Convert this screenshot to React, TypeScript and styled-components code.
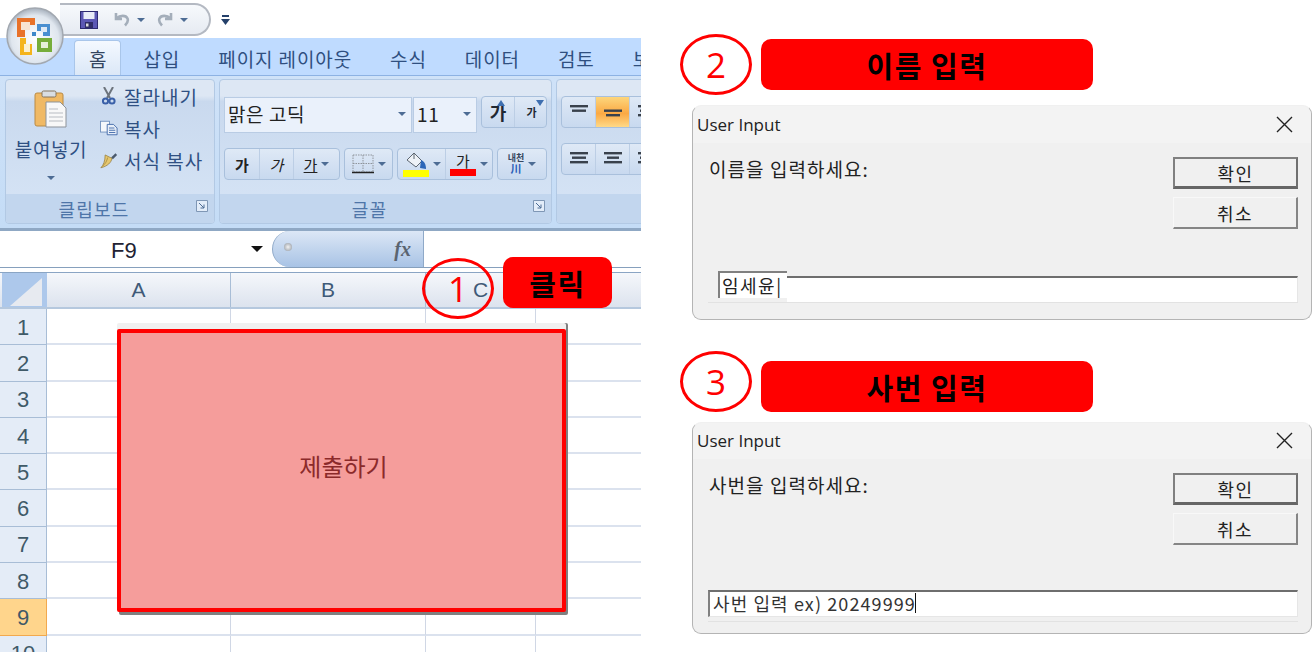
import React from 'react'
import styled, { createGlobalStyle } from 'styled-components'

const KR = `"Noto Sans CJK KR", "Noto Sans", sans-serif`

const Global = createGlobalStyle`
  html, body { margin: 0; padding: 0; background: #fff; overflow: hidden; }
  * { box-sizing: border-box; }
`

const Page = styled.div`
  width: 1316px;
  height: 652px;
  display: flex;
  overflow: hidden;
  font-family: ${KR};
`

/* excel side */
const Excel = styled.div`
  position: relative;
  width: 641px;
  height: 652px;
  flex: none;
  display: flex;
  flex-direction: column;
  overflow: hidden;
`
const TitleRow = styled.div`
  height: 38px;
  flex: none;
  display: flex;
  align-items: flex-start;
  padding: 3px 0 0 60px;
  background: #fff;
`
const QuickBar = styled.div`
  width: 151px;
  height: 33px;
  display: flex;
  align-items: center;
  gap: 11px;
  padding-left: 20px;
  background: linear-gradient(#f7f9fc, #e6ebf2);
  border: 2px solid #b4b9c2;
  border-left: none;
  border-radius: 0 17px 17px 0;
`
const QuickTail = styled.div`
  display: flex;
  margin: 12px 0 0 10px;
`
const OfficeOrb = styled.div`
  position: absolute;
  left: 6px;
  top: 7px;
  width: 58px;
  height: 58px;
`
const TabRow = styled.div`
  height: 38px;
  flex: none;
  display: flex;
  align-items: flex-end;
  padding-left: 74px;
  background: #bfdbff;
  border-bottom: 1px solid #8db2e3;
  white-space: nowrap;
`
const Tab = styled.div<{ $active?: boolean }>`
  height: ${p => (p.$active ? 35 : 34)}px;
  padding: 0 ${p => (p.$active ? 14 : 19)}px;
  margin-right: ${p => (p.$active ? 3 : 0)}px;
  display: flex;
  align-items: center;
  font-size: 19px;
  letter-spacing: ${p => (p.$active ? 0 : 0.9)}px;
  color: ${p => (p.$active ? '#33455f' : '#2f4f80')};
  border-radius: 4px 4px 0 0;
  ${p => p.$active && `
    background: linear-gradient(#f4f9ff, #dbe8f7);
    border: 1px solid #a9c6ea;
    border-bottom: none;
  `}
`
const Ribbon = styled.div`
  height: 155px;
  flex: none;
  display: flex;
  gap: 4px;
  padding: 3px 0 4px 5px;
  background: linear-gradient(#cfe2f8, #c4dcf6);
  border-bottom: 3px solid #8fa8c4;
`
const Group = styled.div<{ $w: number }>`
  width: ${p => p.$w}px;
  flex: none;
  display: flex;
  flex-direction: column;
  overflow: hidden;
  border: 1px solid #b2c9e4;
  border-radius: 4px;
  background: linear-gradient(#dde7f4 0, #dde7f4 11%, #c9d9ee 15%, #d7e5f6 100%);
`
const GroupBody = styled.div`
  flex: 1;
  min-height: 0;
`
const GroupFoot = styled.div`
  position: relative;
  height: 29px;
  flex: none;
  display: flex;
  align-items: center;
  justify-content: center;
  padding-right: 32px;
  font-size: 18px;
  letter-spacing: 1.2px;
  color: #4e75a8;
  background: #c2d6ee;
`
const Launcher = styled.svg`
  position: absolute;
  right: 6px;
  top: 6px;
`
const ClipBody = styled(GroupBody)`
  display: flex;
  padding-left: 7px;
`
const PasteCol = styled.div`
  width: 76px;
  flex: none;
  padding-top: 10px;
  display: flex;
  flex-direction: column;
  align-items: center;
  font-size: 19px;
  letter-spacing: 0.6px;
  color: #2f5083;
`
const PasteLabel = styled.div`
  margin: 8px 0 14px;
  line-height: 26px;
  white-space: nowrap;
`
const ClipList = styled.div`
  margin-left: 11px;
  display: flex;
  flex-direction: column;
`
const ClipItem = styled.div`
  height: 32px;
  display: flex;
  align-items: center;
  gap: 6px;
  font-size: 19px;
  letter-spacing: 1px;
  color: #2f5083;
  white-space: nowrap;
`
const IconSlot = styled.span<{ $push?: number }>`
  width: 18px;
  margin-left: ${p => p.$push ?? 0}px;
  display: flex;
  justify-content: center;
`
const Drop = styled.span<{ $gap?: number }>`
  display: inline-block;
  flex: none;
  width: 0;
  height: 0;
  margin-left: ${p => p.$gap ?? 0}px;
  border-left: 4px solid transparent;
  border-right: 4px solid transparent;
  border-top: 4px solid #4d6c94;
`
const NameDrop = styled.span`
  width: 0;
  height: 0;
  margin-top: -4px;
  border-left: 6px solid transparent;
  border-right: 6px solid transparent;
  border-top: 6px solid #111;
`
const FontBody = styled(GroupBody)`
  padding: 16px 0 0 4px;
  display: flex;
  flex-direction: column;
  gap: 15px;
`
const ToolRow = styled.div`
  display: flex;
  align-items: flex-start;
  gap: 4px;
`
const Select = styled.div<{ $w: number }>`
  width: ${p => p.$w}px;
  height: 36px;
  margin: 1px ${p => (p.$w > 100 ? -3 : 0)}px 0 0;
  display: flex;
  align-items: center;
  justify-content: space-between;
  padding: 0 5px 3px 3px;
  font-size: 19px;
  letter-spacing: 0.6px;
  color: #222;
  background: #eaf1fb;
  border: 1px solid #b9cce4;
`
const BtnGroup = styled.div<{ $w: number }>`
  width: ${p => p.$w}px;
  height: 32px;
  display: flex;
  overflow: hidden;
  background: linear-gradient(#dfe9f6, #c8d9ef);
  border: 1px solid #a9c0dc;
  border-radius: 4px;
`
const Btn = styled.div<{ $w: number; $on?: boolean; $plain?: boolean }>`
  position: relative;
  width: ${p => p.$w}px;
  flex: none;
  display: flex;
  align-items: center;
  justify-content: center;
  gap: 4px;
  color: #222;
  font-size: 15px;
  border-right: ${p => (p.$plain ? 'none' : '1px solid #bccee5')};
  ${p => p.$on && 'background: linear-gradient(#fdd67c, #fba944 55%, #ffd987);'}
`
const BoldGa = styled.span`
  font-weight: 700;
`
const GrowGa = styled(BoldGa)<{ $small?: boolean }>`
  font-size: ${p => (p.$small ? 11 : 18)}px;
  color: #1f2833;
`
const SizeArrow = styled.svg<{ $r: number }>`
  position: absolute;
  top: 3px;
  right: ${p => p.$r}px;
`
const ItalicGa = styled.span`
  font-style: italic;
`
const UnderGa = styled.span`
  text-decoration: underline;
`
const StackGa = styled.span`
  font-size: 9px;
  line-height: 10px;
  font-weight: 700;
  text-align: center;
  color: #37475f;
`
const WrapStream = styled.span`
  color: #2c5fb8;
  font-size: 11px;
`
const ColorGa = styled.span<{ $c: string }>`
  display: flex;
  flex-direction: column;
  align-items: center;
  width: 26px;
  line-height: 17px;
  &::after {
    content: '';
    width: 26px;
    height: 7px;
    background: ${p => p.$c};
  }
`
const FormulaBar = styled.div`
  height: 37px;
  flex: none;
  display: flex;
  background: #fff;
  border-bottom: 1px solid #86a0bd;
  padding-left: 2px;
`
const NameBox = styled.div`
  width: 270px;
  flex: none;
  display: flex;
  align-items: center;
  padding: 3px 9px 0 109px;
  justify-content: space-between;
  font-family: "Liberation Sans", sans-serif;
  font-size: 22px;
  color: #223;
`
const FxPill = styled.div`
  width: 152px;
  flex: none;
  display: flex;
  align-items: center;
  justify-content: space-between;
  padding: 0 12px 0 11px;
  background: linear-gradient(#dce7f6, #a8c3e5);
  border: 1px solid #8fa9c8;
  border-top: none;
  border-bottom: none;
  border-radius: 20px 0 0 20px;
`
const PillDot = styled.span`
  width: 8px;
  height: 8px;
  margin-top: -4px;
  border-radius: 50%;
  background: radial-gradient(#f2f2f2, #8e959e);
`
const FxMark = styled.span`
  font-family: "Liberation Serif", serif;
  font-style: italic;
  font-weight: 700;
  font-size: 20px;
  color: #5a6470;
`
const Sheet = styled.div`
  flex: none;
  margin-top: 4px;
  border-top: 1px solid #8aa5c4;
`
const ColHeadRow = styled.div`
  height: 36px;
  display: flex;
  padding-left: 2px;
  background: linear-gradient(#f5f7fb, #dce3ee);
  border-bottom: 2px solid #b5c8de;
`
const Corner = styled.div`
  width: 45px;
  flex: none;
  display: flex;
  align-items: flex-end;
  justify-content: flex-end;
  padding: 0 5px 1px 0;
  background: #adc8eb;
`
const ColHead = styled.div<{ $w: number }>`
  width: ${p => p.$w}px;
  flex: none;
  display: flex;
  align-items: center;
  justify-content: center;
  font-family: "Liberation Sans", sans-serif;
  font-size: 21px;
  color: #3f5a78;
  border-right: 1px solid #a8bdd6;
`
const Row = styled.div`
  height: 36.3px;
  display: flex;
`
const RowHead = styled.div<{ $on?: boolean }>`
  width: 47px;
  flex: none;
  display: flex;
  align-items: center;
  justify-content: center;
  padding-top: 2px;
  font-family: "Liberation Sans", sans-serif;
  font-size: 22px;
  color: #3f5a68;
  background: ${p => (p.$on ? '#ffd58c' : '#e4ecf7')};
  border-right: 1px solid ${p => (p.$on ? '#f2a94e' : '#a8bdd6')};
  border-bottom: 1px solid ${p => (p.$on ? '#f2a94e' : '#a8bdd6')};
`
const Cell = styled.div<{ $w: number }>`
  width: ${p => p.$w}px;
  flex: none;
  border-right: 1px solid #d0d7e5;
  border-bottom: 2px solid #dbe2ee;
`
const Shape = styled.div`
  position: absolute;
  left: 117px;
  top: 329px;
  width: 449px;
  height: 283px;
  display: flex;
  align-items: center;
  justify-content: center;
  padding: 0 0 10px 4px;
  font-size: 24px;
  color: #8b2a2a;
  background: #f59d9b;
  border: 4px solid #ff0000;
  border-radius: 2px;
  box-shadow: 0 -6px 0 #f0f0f0, 2px 3px 0 #808080, 2px -6px 0 #808080;
`
const Ring = styled.div`
  width: 72px;
  height: 61px;
  flex: none;
  display: flex;
  align-items: center;
  justify-content: center;
  font-family: "Open Sans", sans-serif;
  font-size: 35px;
  color: #ff0000;
  background: transparent;
  border: 3px solid #ff0000;
  border-radius: 50%;
`
const RingOverSheet = styled(Ring)`
  position: absolute;
  left: 422px;
  top: 258px;
`
const RedTag = styled.div<{ $w: number; $top: number }>`
  width: ${p => p.$w}px;
  height: 51px;
  margin-top: ${p => p.$top}px;
  flex: none;
  display: flex;
  align-items: center;
  justify-content: center;
  font-size: 29px;
  font-weight: 700;
  letter-spacing: 1.5px;
  color: #000;
  background: #ff0000;
  border-radius: 10px;
`
const TagOverSheet = styled(RedTag)`
  position: absolute;
  left: 503px;
  top: 257px;
  margin: 0;
`

/* right side */
const Side = styled.div`
  flex: 1;
  padding: 34px 0 0 39px;
  display: flex;
  flex-direction: column;
`
const StepHead = styled.div`
  display: flex;
  align-items: flex-start;
  gap: 9px;
  height: 61px;
  margin-bottom: 10px;
`
const Dialog = styled.div<{ $h: number; $after: number }>`
  width: 620px;
  height: ${p => p.$h}px;
  margin: 0 0 ${p => p.$after}px 12px;
  flex: none;
  display: flex;
  flex-direction: column;
  background: #f0f0f0;
  border: 1px solid #b4b4b4;
  border-top-color: #f0f0f0;
  border-radius: 9px;
`
const DialogTitle = styled.div<{ $h: number }>`
  height: ${p => p.$h}px;
  flex: none;
  display: flex;
  align-items: center;
  justify-content: space-between;
  padding: 0 18px 1px 4px;
  font-family: "Open Sans", sans-serif;
  font-size: 17px;
  color: #222;
  background: #f3f3f3;
  border-radius: 9px 9px 0 0;
`
const DialogBody = styled.div`
  flex: 1;
  padding: 14px 13px 0 15px;
  display: flex;
  flex-direction: column;
`
const PromptRow = styled.div`
  display: flex;
  justify-content: space-between;
`
const Prompt = styled.div`
  padding-left: 1px;
  font-size: 19px;
  line-height: 24px;
  letter-spacing: 1.05px;
  color: #222;
`
const ButtonCol = styled.div`
  width: 125px;
  display: flex;
  flex-direction: column;
  gap: 8px;
`
const WinButton = styled.div<{ $primary?: boolean }>`
  height: 32px;
  display: flex;
  align-items: center;
  justify-content: center;
  font-size: 18px;
  letter-spacing: 1.5px;
  color: #222;
  background: #f0f0f0;
  border-style: solid;
  border-width: ${p => (p.$primary ? '2px 2px 3px 2px' : '1px 2px 2px 1px')};
  border-color: ${p => (p.$primary
    ? '#808080 #707070 #666666 #808080'
    : '#f8f8f8 #858585 #858585 #f8f8f8')};
`
const InputWrap = styled.div<{ $mt: number }>`
  margin-top: ${p => p.$mt}px;
  display: flex;
  align-items: flex-start;
  height: 32px;
  border-bottom: 1px solid #e2e2e2;
`
const PastedText = styled.div`
  width: 69px;
  height: 27px;
  flex: none;
  margin-left: 10px;
  padding-left: 2px;
  font-size: 18px;
  line-height: 24px;
  letter-spacing: 1.5px;
  white-space: nowrap;
  color: #222;
  background: #fff;
  border-top: 2px solid #808080;
  border-left: 2px solid #808080;
`
const FieldRest = styled.div`
  flex: 1;
  height: 26px;
  margin-top: 5px;
  background: #fff;
  border-top: 2px solid #6e6e6e;
  border-right: 1px solid #e6e6e6;
`
const Field = styled.div`
  flex: 1;
  height: 27px;
  display: flex;
  align-items: center;
  padding: 0 0 2px 3px;
  font-size: 18px;
  letter-spacing: 1.1px;
  white-space: nowrap;
  color: #333;
  background: #fff;
  border-top: 2px solid #6e6e6e;
  border-left: 2px solid #808080;
  border-right: 1px solid #e6e6e6;
  border-bottom: 1px solid #e6e6e6;
`
const Caret = styled.span`
  width: 1px;
  height: 20px;
  margin-left: -1px;
  background: #111;
`
const BucketWrap = styled.span`
  display: flex;
  flex-direction: column;
  align-items: center;
  width: 26px;
  &::after {
    content: '';
    width: 26px;
    height: 7px;
    background: #ffff00;
  }
`

/* icons */
const OfficeLogo = () => (
  <svg width="58" height="58" viewBox="0 0 58 58">
    <defs>
      <radialGradient id="orb" cx="0.5" cy="0.55" r="0.6">
        <stop offset="0" stopColor="#ffffff" />
        <stop offset="0.7" stopColor="#dfe6ee" />
        <stop offset="1" stopColor="#8f9aa8" />
      </radialGradient>
    </defs>
    <circle cx="29" cy="29" r="28" fill="url(#orb)" stroke="#a2a8b0" strokeWidth="1.5" />
    <path d="M11 11h18v7h-5v5h-5v7h-8z" fill="#e8722a" />
    <rect x="15" y="15" width="9" height="8" fill="#f7e3d2" />
    <path d="M31 17h13v12h-7v-5h-6z" fill="#4a8fd0" />
    <rect x="35" y="20" width="6" height="5" fill="#dfe9f5" />
    <path d="M14 31h6v6h6v11h-12z" fill="#f4b41c" />
    <rect x="18" y="37" width="6" height="8" fill="#fbf0cf" />
    <path d="M31 31h15v14h-15z" fill="#76ad3a" />
    <rect x="35" y="35" width="7" height="6" fill="#e6f0d8" />
    <rect x="26" y="25" width="4" height="4" fill="#3f88c9" />
  </svg>
)
const SaveIcon = () => (
  <svg width="18" height="18" viewBox="0 0 18 18">
    <rect x="0.5" y="0.5" width="17" height="17" fill="#5c58b4" stroke="#2d2a70" />
    <rect x="3.5" y="1" width="11" height="7" fill="#e8ecf7" />
    <rect x="5" y="11" width="8" height="6" fill="#2f2c66" />
    <rect x="6" y="12.5" width="2.5" height="3" fill="#dcdcdc" />
  </svg>
)
const ArrowIcon = ({ flip }: { flip?: boolean }) => (
  <svg width="16" height="15" viewBox="0 0 16 15" style={flip ? { transform: 'scaleX(-1)' } : undefined}>
    <path d="M2 1v6h6M2.5 6.5C6 3 12 3 13.5 6.5c1 2.4-.5 5-2.5 7" fill="none" stroke="#a4aeba" strokeWidth="2.6" />
  </svg>
)
const MoreIcon = () => (
  <svg width="9" height="11" viewBox="0 0 9 11">
    <rect x="1" y="0" width="7" height="2" fill="#24406a" />
    <path d="M0 4h9L4.500 10z" fill="#24406a" />
  </svg>
)
const ClipboardIcon = () => (
  <svg width="34" height="38" viewBox="0 0 34 38">
    <rect x="1" y="3" width="28" height="33" rx="2" fill="#f0b964" stroke="#b98a45" />
    <rect x="8" y="1" width="14" height="6" rx="1.500" fill="#d9dde2" stroke="#85745c" />
    <path d="M12 12h14l6 6v19h-20z" fill="#f8f8f8" stroke="#8d939a" />
    <path d="M15 19h9M15 23h14M15 27h14M15 31h14" stroke="#b8bcc2" />
  </svg>
)
const ScissorsIcon = () => (
  <svg width="16" height="18" viewBox="0 0 16 18">
    <path d="M3 0l6 11M12 0L6 11" stroke="#6d747d" strokeWidth="2" />
    <circle cx="4.500" cy="14" r="2.600" fill="none" stroke="#3a60a8" strokeWidth="2" />
    <circle cx="11" cy="14" r="2.600" fill="none" stroke="#3a60a8" strokeWidth="2" />
  </svg>
)
const CopyIcon = () => (
  <svg width="20" height="16" viewBox="0 0 20 16">
    <rect x="0.500" y="0.500" width="10" height="12" fill="#f4f7fb" stroke="#6f8fbd" />
    <path d="M8 4h7l4 4v7.500H8z" fill="#e7eef8" stroke="#3f68a8" />
    <path d="M10 8h6M10 10.500h7M10 13h7" stroke="#3f68a8" />
  </svg>
)
const BrushIcon = () => (
  <svg width="21" height="19" viewBox="0 0 21 19">
    <path d="M13 6l5-5 2 2-5 5z" fill="#4b5a6e" />
    <path d="M6 3l8 4c-1 5-5 9-13 11 3-3 5-8 5-15z" fill="#e6c76e" stroke="#8c7434" strokeWidth="0.800" />
    <path d="M9 6C8 10 6 14 3 16" stroke="#a88c40" fill="none" />
  </svg>
)
const LauncherIcon = () => (
  <Launcher width="12" height="12" viewBox="0 0 12 12">
    <path d="M0.500 0.500h11v11h-11z" fill="#e3edf9" stroke="#7f97b5" />
    <path d="M3 3l5 5M8 4.500V8H4.500" fill="none" stroke="#4d6c94" />
  </Launcher>
)
const BordersIcon = () => (
  <svg width="22" height="20" viewBox="0 0 22 20">
    <path d="M1 1h20v17H1zM11 1v17M1 9.500h20" fill="none" stroke="#8f949b" strokeDasharray="1.500 1" />
    <path d="M0 18.500h22" stroke="#222" strokeWidth="1.600" />
  </svg>
)
const BucketIcon = () => (
  <svg width="24" height="18" viewBox="0 0 24 18">
    <path d="M10 1l8 8-6 6-9-7z" fill="#eef2f7" stroke="#5d6671" />
    <path d="M10 1v6" stroke="#5d6671" />
    <path d="M17 8c3 1 5 4 5 9l-6-1z" fill="#2c66b8" />
  </svg>
)
const AlignLines = ({ widths }: { widths: number[] }) => (
  <svg width="18" height="14" viewBox="0 0 18 14">
    {widths.map((w, i) => (
      <rect key={i} x={(18 - w) / 2} y={i * 4.5} width={w} height="2.400" fill="#39414c" />
    ))}
  </svg>
)
const CloseX = () => (
  <svg width="17" height="17" viewBox="0 0 17 17">
    <path d="M1 1l15 15M16 1L1 16" stroke="#222" strokeWidth="1.400" />
  </svg>
)

const columns = [{ n: 'A', w: 184 }, { n: 'B', w: 195 }, { n: 'C', w: 110 }, { n: 'D', w: 106 }]
const rowNumbers = [1, 2, 3, 4, 5, 6, 7, 8, 9, 10]
const tabs = ['삽입', '페이지 레이아웃', '수식', '데이터', '검토', '보기']

const ExcelPane = () => (
  <Excel>
    <TitleRow>
      <QuickBar>
        <SaveIcon />
        <IconSlot $push={4}><ArrowIcon /></IconSlot>
        <Drop $gap={-5} />
        <IconSlot><ArrowIcon flip /></IconSlot>
        <Drop $gap={-5} />
      </QuickBar>
      <QuickTail><MoreIcon /></QuickTail>
    </TitleRow>
    <OfficeOrb><OfficeLogo /></OfficeOrb>
    <TabRow>
      <Tab $active>홈</Tab>
      {tabs.map(t => <Tab key={t}>{t}</Tab>)}
    </TabRow>
    <Ribbon>
      <Group $w={210}>
        <ClipBody>
          <PasteCol>
            <ClipboardIcon />
            <PasteLabel>붙여넣기</PasteLabel>
            <Drop />
          </PasteCol>
          <ClipList>
            <ClipItem><IconSlot><ScissorsIcon /></IconSlot>잘라내기</ClipItem>
            <ClipItem><IconSlot><CopyIcon /></IconSlot>복사</ClipItem>
            <ClipItem><IconSlot><BrushIcon /></IconSlot>서식 복사</ClipItem>
          </ClipList>
        </ClipBody>
        <GroupFoot>클립보드<LauncherIcon /></GroupFoot>
      </Group>
      <Group $w={333}>
        <FontBody>
          <ToolRow>
            <Select $w={188}>맑은 고딕<Drop /></Select>
            <Select $w={64}>11<Drop /></Select>
            <BtnGroup $w={66}>
              <Btn $w={33}>
                <GrowGa>가</GrowGa>
                <SizeArrow $r={9} width="8" height="6" viewBox="0 0 8 6"><path d="M0 6l4-6 4 6z" fill="#3f6fb0" /></SizeArrow>
              </Btn>
              <Btn $w={33} $plain>
                <GrowGa $small>가</GrowGa>
                <SizeArrow $r={4} width="8" height="6" viewBox="0 0 8 6"><path d="M0 0l4 6 4-6z" fill="#3f6fb0" /></SizeArrow>
              </Btn>
            </BtnGroup>
          </ToolRow>
          <ToolRow>
            <BtnGroup $w={116}>
              <Btn $w={35}><BoldGa>가</BoldGa></Btn>
              <Btn $w={34}><ItalicGa>가</ItalicGa></Btn>
              <Btn $w={45} $plain><UnderGa>가</UnderGa><Drop /></Btn>
            </BtnGroup>
            <BtnGroup $w={49}>
              <Btn $w={47} $plain><BordersIcon /><Drop /></Btn>
            </BtnGroup>
            <BtnGroup $w={96}>
              <Btn $w={48}><BucketWrap><BucketIcon /></BucketWrap><Drop /></Btn>
              <Btn $w={46} $plain><ColorGa $c="#ff0000">가</ColorGa><Drop /></Btn>
            </BtnGroup>
            <BtnGroup $w={50}>
              <Btn $w={48} $plain><StackGa>내천<br /><WrapStream>川</WrapStream></StackGa><Drop /></Btn>
            </BtnGroup>
          </ToolRow>
        </FontBody>
        <GroupFoot>글꼴<LauncherIcon /></GroupFoot>
      </Group>
      <Group $w={110}>
        <FontBody>
          <ToolRow>
            <BtnGroup $w={110}>
              <Btn $w={34}><AlignLines widths={[18, 14, 0]} /></Btn>
              <Btn $w={34} $on><AlignLines widths={[0, 18, 14]} /></Btn>
              <Btn $w={34} $plain><AlignLines widths={[18, 14, 18]} /></Btn>
            </BtnGroup>
          </ToolRow>
          <ToolRow>
            <BtnGroup $w={110}>
              <Btn $w={34}><AlignLines widths={[18, 14, 18]} /></Btn>
              <Btn $w={34}><AlignLines widths={[18, 12, 18]} /></Btn>
              <Btn $w={34} $plain><AlignLines widths={[18, 14, 18]} /></Btn>
            </BtnGroup>
          </ToolRow>
        </FontBody>
        <GroupFoot />
      </Group>
    </Ribbon>
    <FormulaBar>
      <NameBox>F9<NameDrop /></NameBox>
      <FxPill><PillDot /><FxMark>fx</FxMark></FxPill>
    </FormulaBar>
    <Sheet>
      <ColHeadRow>
        <Corner>
          <svg width="32" height="28" viewBox="0 0 32 28"><path d="M32 0v28H0z" fill="#e7eaf0" /></svg>
        </Corner>
        {columns.map(c => <ColHead key={c.n} $w={c.w}>{c.n}</ColHead>)}
      </ColHeadRow>
      {rowNumbers.map(n => (
        <Row key={n}>
          <RowHead $on={n === 9}>{n}</RowHead>
          {columns.map(c => <Cell key={c.n} $w={c.w} />)}
        </Row>
      ))}
    </Sheet>
    <Shape>제출하기</Shape>
    <RingOverSheet>1</RingOverSheet>
    <TagOverSheet $w={109} $top={0}>클릭</TagOverSheet>
  </Excel>
)

const App = () => (
  <Page>
    <Global />
    <ExcelPane />
    <Side>
      <StepHead>
        <Ring>2</Ring>
        <RedTag $w={332} $top={5}>이름 입력</RedTag>
      </StepHead>
      <Dialog $h={215} $after={31}>
        <DialogTitle $h={37}>User Input<CloseX /></DialogTitle>
        <DialogBody>
          <PromptRow>
            <Prompt>이름을 입력하세요:</Prompt>
            <ButtonCol>
              <WinButton $primary>확인</WinButton>
              <WinButton>취소</WinButton>
            </ButtonCol>
          </PromptRow>
          <InputWrap $mt={42}>
            <PastedText>임세윤|</PastedText>
            <FieldRest />
          </InputWrap>
        </DialogBody>
      </Dialog>
      <StepHead>
        <Ring>3</Ring>
        <RedTag $w={332} $top={10}>사번 입력</RedTag>
      </StepHead>
      <Dialog $h={212} $after={0}>
        <DialogTitle $h={36}>User Input<CloseX /></DialogTitle>
        <DialogBody>
          <PromptRow>
            <Prompt>사번을 입력하세요:</Prompt>
            <ButtonCol>
              <WinButton $primary>확인</WinButton>
              <WinButton>취소</WinButton>
            </ButtonCol>
          </PromptRow>
          <InputWrap $mt={45}>
            <Field>사번 입력 ex) 20249999<Caret /></Field>
          </InputWrap>
        </DialogBody>
      </Dialog>
    </Side>
  </Page>
)

export default App
